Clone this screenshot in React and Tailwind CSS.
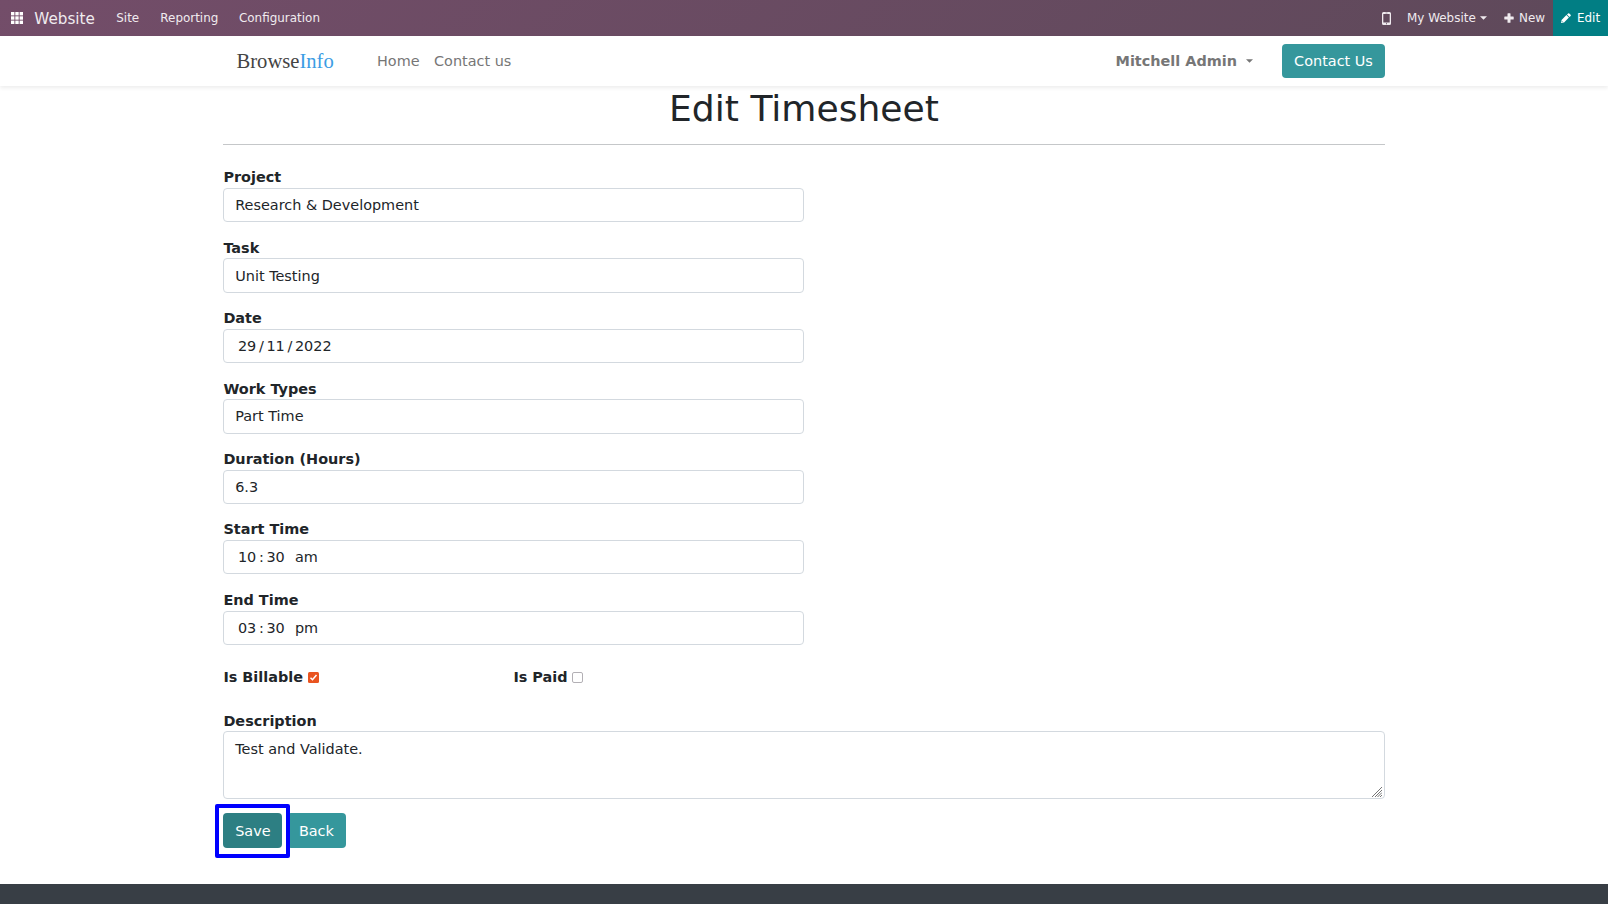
import React from "react";

function Field({ label, children }) {
  return (
    <div className="mb-[14.45px] w-[580.5px]">
      <label className="block h-[21.7px] font-bold leading-[22.8px]">{label}</label>
      <div className="flex h-[34.3px] items-center rounded-[4px] border border-[#d3d9df] pl-[10.8px] pt-[1.8px] leading-[21.7px]">
        {children}
      </div>
    </div>
  );
}

function Segments({ parts }) {
  return (
    <span className="flex pl-[2.7px]">
      {parts.map(([text, cls], i) => (
        <span key={i} className={cls}>{text}</span>
      ))}
    </span>
  );
}

function Caret({ className }) {
  return (
    <svg className={className} viewBox="0 0 8 4" fill="currentColor">
      <path d="M0 0h8L4 4z" />
    </svg>
  );
}

function SystemBar() {
  return (
    <nav className="flex h-9 items-center whitespace-nowrap bg-linear-[135deg,#734d69,#5e495a] text-[11.95px] leading-[18px] text-[#f0ebef]">
      <svg className="ml-[11px] size-3" viewBox="0 0 12 12" fill="#fff">
        {[0, 4.3, 8.6].map((y) => [0, 4.3, 8.6].map((x) => <rect key={`${x}-${y}`} x={x} y={y} width="3.4" height="3.4" />))}
      </svg>
      <span className="ml-[11.3px] w-[82px] pt-[1px] text-[15.2px]">Website</span>
      <span className="w-[44px]">Site</span>
      <span className="w-[78.7px]">Reporting</span>
      <span>Configuration</span>
      <div className="ml-auto flex h-full items-center">
        <svg className="mr-[16.5px] h-[13px] w-[9px]" viewBox="0 0 9 13">
          <path fill="currentColor" fillRule="evenodd" d="M1.5 0h6A1.5 1.5 0 0 1 9 1.500v10A1.500 1.500 0 0 1 7.500 13h-6A1.500 1.500 0 0 1 0 11.500v-10A1.500 1.500 0 0 1 1.500 0zM1.300 2v8.500h6.400V2zM3.500 .8v.5h2v-.5zM4 11.300v.900h1v-.900z" />
        </svg>
        <span className="w-[67px]">My Website</span>
        <Caret className="ml-[6px] mr-[16.5px] h-[4px] w-[7px]" />
        <svg className="mr-[5.5px] size-[10px]" viewBox="0 0 10 10" fill="currentColor">
          <path d="M4 .3h2a.5.5 0 0 1 .5.500v2.700h2.700a.5.5 0 0 1 .5.500v2a.5.5 0 0 1-.5.500H6.500v2.700a.5.5 0 0 1-.5.500H4a.5.5 0 0 1-.5-.5V6.500H.8a.5.5 0 0 1-.5-.5V4a.5.5 0 0 1 .5-.5h2.700V.8A.5.5 0 0 1 4 .3z" />
        </svg>
        <span className="w-[34px]">New</span>
        <div className="flex h-full w-[55px] items-center bg-[#017e84] pl-2 text-white">
          <svg className="mr-[6px] size-[10px]" viewBox="0 0 10 10" fill="currentColor">
            <path d="M0 10l.6-3.100 4.800-4.800 2.500 2.500-4.800 4.800zM6 1.500L7.100.4a.9.9 0 0 1 1.200 0l1.300 1.300a.9.9 0 0 1 0 1.200L8.500 4z" />
            <path d="M.9 8.200l.9.9" stroke="#017e84" strokeWidth=".7" />
          </svg>
          <span>Edit</span>
        </div>
      </div>
    </nav>
  );
}

function SiteHeader() {
  return (
    <header className="flex h-[50px] items-center whitespace-nowrap pl-[236.500px] pr-[223.500px] text-[#767676] shadow-[0_2px_4px_rgba(0,0,0,0.075)]">
      <span className="w-[140.500px] text-[20.600px] leading-none text-[#444] [font-family:'Liberation_Serif',serif]">
        Browse<span className="text-[#3b9de4]">Info</span>
      </span>
      <span className="w-[57px] pt-[1.500px]">Home</span>
      <span className="pt-[1.500px]">Contact us</span>
      <span className="ml-auto pt-[1.500px] font-bold">Mitchell Admin</span>
      <Caret className="ml-[9px] mr-[28.500px] h-[4px] w-[7px]" />
      <button className="h-[34.500px] w-[103px] rounded-[4px] bg-[#35979c] pl-px pt-px text-white">Contact Us</button>
    </header>
  );
}

export default function App() {
  return (
    <div className="flex h-[904px] flex-col overflow-hidden bg-white text-[14.430px] text-[#212529] [font-family:'DejaVu_Sans',sans-serif]">
      <SystemBar />
      <SiteHeader />
      <main className="ml-[223.400px] w-[1161.200px] grow">
        <h1 className="mt-[2px] h-[43px] text-center text-[36.100px] leading-[43px]">Edit Timesheet</h1>
        <hr className="mb-[21.300px] mt-[13px] border-t border-[#c5c7c9]" />
        <Field label="Project">Research &amp; Development</Field>
        <Field label="Task">Unit Testing</Field>
        <Field label="Date">
          <Segments parts={[["29", "w-[21px]"], ["/", "w-[7.500px]"], ["11", "w-[21px]"], ["/", "w-[7.500px]"], ["2022", ""]]} />
        </Field>
        <Field label="Work Types">Part Time</Field>
        <Field label="Duration (Hours)">6.3</Field>
        <Field label="Start Time">
          <Segments parts={[["10", "w-[21px]"], [":", "w-[7.500px]"], ["30", "w-[28.500px]"], ["am", ""]]} />
        </Field>
        <Field label="End Time">
          <Segments parts={[["03", "w-[21px]"], [":", "w-[7.500px]"], ["30", "w-[28.500px]"], ["pm", ""]]} />
        </Field>
        <div className="mt-[21.600px] flex h-[22px] items-center font-bold leading-[22px]">
          <div className="flex w-[290px] items-center">
            Is Billable
            <svg className="ml-[5px] size-[11px]" viewBox="0 0 11 11">
              <rect width="11" height="11" rx="1.500" fill="#e95420" />
              <path d="M2.500 5.700l2 2 4-4.700" fill="none" stroke="#fff" strokeWidth="1.500" />
            </svg>
          </div>
          Is Paid
          <span className="ml-[4.500px] size-[11px] rounded-[2px] border border-[#b3b0b5]" />
        </div>
        <label className="mt-[21.500px] block h-[21.400px] font-bold leading-[22px]">Description</label>
        <div className="flex h-[67.500px] items-end justify-between rounded-[4px] border border-[#d3d9df] pl-[10.800px]">
          <p className="self-start pt-[6.500px] leading-[21.700px]">Test and Validate.</p>
          <svg className="mb-[1px] mr-[2px] size-[10px]" viewBox="0 0 10 10" stroke="#666" strokeWidth="0.900">
            <path d="M0 10L10 0M3 10l7-7M5.500 10l4.500-4.500M8 10l2-2" />
          </svg>
        </div>
        <div className="mt-[14.300px] flex gap-[4.500px] text-white">
          <div className="relative">
            <button className="h-[35px] w-[59px] rounded-[4px] bg-[#2d7f83] pt-[2px]">Save</button>
            <span className="absolute -left-[8.500px] -top-[9px] h-[54px] w-[75px] rounded-[2px] border-4 border-[#0000ff]" />
          </div>
          <button className="h-[35px] w-[59px] rounded-[4px] bg-[#35979c] pt-[2px]">Back</button>
        </div>
      </main>
      <footer className="h-5 bg-[#383e45]" />
    </div>
  );
}
